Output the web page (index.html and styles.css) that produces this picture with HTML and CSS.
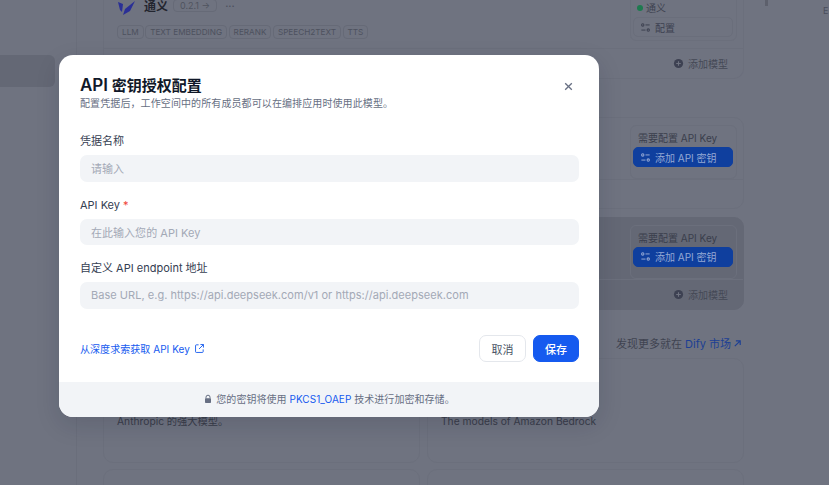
FILE: index.html
```html
<!DOCTYPE html>
<html lang="zh">
<head>
<meta charset="utf-8">
<title>API 密钥授权配置</title>
<link rel="stylesheet" href="styles.css">
</head>
<body>
<div class="page">
  <aside class="side"><div class="side-item"></div></aside>
  <main class="main">
    <section class="provider first">
      <div class="provider-top">
        <div class="provider-info">
          <div class="brand">
            <svg class="brand-logo" viewBox="0 0 20 20"><path d="M1 6l5 2-1 8-2-2zM8 13l10-8-5 10-7 4z" fill="#2a2f96"/></svg>
            <b>通义</b><span class="ver">0.2.1 →</span><span class="dots">···</span>
          </div>
          <div class="tags"><span>LLM</span><span>TEXT EMBEDDING</span><span>RERANK</span><span>SPEECH2TEXT</span><span>TTS</span></div>
        </div>
        <div class="cfg">
          <div class="cfg-status"><i class="dot"></i>通义</div>
          <div class="cfg-btn">
            <svg class="sliders" viewBox="0 0 12 12"><use href="#sl"/></svg>配置
          </div>
        </div>
      </div>
      <div class="provider-foot"><span class="add"><svg class="plus" viewBox="0 0 12 12"><use href="#pl"/></svg>添加模型</span></div>
    </section>
    <section class="provider second">
      <div class="provider-top">
        <div class="provider-info"></div>
        <div class="cfg">
          <div class="cfg-need">需要配置 API Key</div>
          <div class="cfg-btn primary"><svg class="sliders" viewBox="0 0 12 12"><use href="#sl"/></svg>添加 API 密钥</div>
        </div>
      </div>
      <div class="provider-foot"></div>
    </section>
    <section class="provider third">
      <div class="provider-top">
        <div class="provider-info"></div>
        <div class="cfg">
          <div class="cfg-need">需要配置 API Key</div>
          <div class="cfg-btn primary"><svg class="sliders" viewBox="0 0 12 12"><use href="#sl"/></svg>添加 API 密钥</div>
        </div>
      </div>
      <div class="provider-foot"><span class="add"><svg class="plus" viewBox="0 0 12 12"><use href="#pl"/></svg>添加模型</span></div>
    </section>
    <div class="more">发现更多就在&nbsp;<a>Dify 市场</a>
      <svg class="arrow" viewBox="0 0 10 10"><path d="M2 8l6-6M3.200 2H8v4.800" fill="none" stroke="#1c3f94" stroke-width="1.300"/></svg>
    </div>
    <div class="market">
      <div class="mcard"><p>Anthropic 的强大模型。</p></div>
      <div class="mcard"><p>The models of Amazon Bedrock</p></div>
      <div class="mcard"></div>
      <div class="mcard"></div>
    </div>
  </main>
  <div class="edge"><div class="thumb"></div><div class="edge-text">E</div></div>
</div>

<svg class="defs" width="0" height="0">
  <symbol id="sl" viewBox="0 0 12 12"><g fill="none" stroke="currentColor" stroke-width="1.100"><circle cx="3" cy="3.200" r="1.300"/><path d="M6 3.200h4.500"/><circle cx="9" cy="8.800" r="1.300"/><path d="M1.500 8.800H6"/></g></symbol>
  <symbol id="pl" viewBox="0 0 12 12"><circle cx="6" cy="6" r="5" fill="currentColor"/><path d="M6 3.500v5M3.500 6h5" stroke="#6f7380" stroke-width="1.200"/></symbol>
</svg>

<div class="dialog">
  <div class="dialog-body">
    <button class="close" aria-label="关闭"><svg viewBox="0 0 10 10"><path d="M2 2l6 6M8 2l-6 6" stroke="#676f83" stroke-width="1.200" fill="none"/></svg></button>
    <h1><span class="lat">API</span> 密钥授权配置</h1>
    <p class="sub">配置凭据后，工作空间中的所有成员都可以在编排应用时使用此模型。</p>
    <div class="field">
      <label>凭据名称</label>
      <div class="input">请输入</div>
    </div>
    <div class="field">
      <label>API Key <em>*</em></label>
      <div class="input">在此输入您的 API Key</div>
    </div>
    <div class="field">
      <label>自定义 API endpoint 地址</label>
      <div class="input">Base URL, e.g. https://api.deepseek.com/v1 or https://api.deepseek.com</div>
    </div>
    <div class="actions">
      <a class="doc">从深度求索获取 API Key
        <svg viewBox="0 0 12 12"><path d="M5 2H2.500A.8.8 0 0 0 1.700 2.800v6.700a.8.8 0 0 0 .8.8h6.700a.8.8 0 0 0 .8-.8V7M7 1.700h3.300V5M10.300 1.700L5.500 6.500" fill="none" stroke="#155aef" stroke-width="1"/></svg>
      </a>
      <div class="btns">
        <button class="btn">取消</button>
        <button class="btn save">保存</button>
      </div>
    </div>
  </div>
  <div class="dialog-foot">
    <svg viewBox="0 0 10 10"><path d="M3 4.500V3.200a2 2 0 0 1 4 0v1.300" fill="none" stroke="#676f83" stroke-width="1"/><rect x="2" y="4.300" width="6" height="4.700" rx=".8" fill="#676f83"/></svg>
    您的密钥将使用&nbsp;<a>PKCS1_OAEP</a>&nbsp;技术进行加密和存储。
  </div>
</div>
</body>
</html>
```
FILE: styles.css
```css
* { box-sizing: border-box; }
html, body { margin: 0; height: 100%; overflow: hidden; }
body {
  background: #6f7380;
  font-family: Inter, "Noto Sans CJK SC", sans-serif;
  font-size: 11px;
  color: #3d4150;
}
.defs { position: absolute; }
.page { display: flex; height: 485px; overflow: hidden; }
.side {
  width: 77px;
  flex: none;
  border-right: 1px solid #6a6e7b;
  padding-top: 55px;
}
.side-item { width: 55px; height: 32px; background: #646875; border-radius: 0 6px 6px 0; }
.main { width: 667px; flex: none; margin-top: -26px; padding-left: 26px; }
.edge { display: flex; gap: 55px; padding-left: 21px; align-items: flex-start; }
.thumb { width: 3px; height: 6px; background: #5d606c; flex: none; }
.edge-text { padding-top: 5px; font-size: 9px; line-height: 11px; color: #4a4e5c; }

.provider {
  width: 641px;
  border: 1px solid #6b6f7c;
  border-radius: 10px;
  display: flex;
  flex-direction: column;
}
.provider.first { height: 105px; margin-bottom: 38px; border-top-color: transparent; }
.provider.second { height: 92px; margin-bottom: 7.500px; }
.provider.third { height: 93px; background: #646875; border-color: #646875; }
.provider-top { flex: 1; display: flex; justify-content: space-between; padding: 7px 6px 0 13px; }
.first .provider-top { padding-top: 0; }
.provider-info { padding-top: 22.500px; }
.provider-foot {
  height: 30px;
  flex: none;
  border-top: 1px solid #6b6f7c;
  display: flex;
  justify-content: flex-end;
  align-items: center;
  padding-right: 15px;
}
.brand { display: flex; align-items: center; gap: 5px; height: 16px; }
.brand-logo { width: 20px; height: 20px; }
.brand b { font-size: 12px; color: #23252f; margin-left: 2px; }
.ver { border: 1px solid #666a77; border-radius: 4px; font-size: 9px; padding: 0 6px; color: #50545f; }
.dots { color: #4a4e5c; margin-left: 3px; }
.tags { display: flex; gap: 1.500px; margin-top: 11px; }
.tags span {
  border: 1px solid #666a77;
  border-radius: 4px;
  font-size: 8.200px;
  line-height: 12.500px;
  padding: 0 4px;
  color: #4d515e;
}
.cfg {
  width: 107px;
  height: 54px;
  flex: none;
  border: 1px solid #6b6f7c;
  border-radius: 6px;
  padding: 4px 3px 3px 2px;
}
.first .cfg { height: 66px; padding-top: 26.500px; }
.cfg-status { display: flex; align-items: center; gap: 3px; font-size: 10px; line-height: 11px; height: 11px; padding-left: 4px; color: #3f4351; overflow: hidden; }
.dot { width: 6px; height: 6px; border-radius: 50%; background: #1e7a4f; }
.cfg-need { font-size: 10px; line-height: 17px; padding-left: 5px; color: #3a3e4c; white-space: nowrap; }
.cfg-btn {
  height: 20px;
  border: 1px solid #6a6e7b;
  border-radius: 5px;
  display: flex;
  align-items: center;
  gap: 4px;
  padding-left: 6px;
  font-size: 10px;
  color: #3d4150;
  white-space: nowrap;
}
.first .cfg-btn { margin-top: 3.500px; }
.cfg-btn.primary { background: #0f3f9e; border-color: #0f3f9e; color: #94a8d4; }
.sliders { width: 11px; height: 11px; }
.add { display: flex; align-items: center; gap: 4px; color: #454956; font-size: 10px; }
.plus { width: 11px; height: 11px; color: #3d4152; }
.more { display: flex; align-items: center; justify-content: flex-end; width: 641px; height: 16px; margin: 25.500px 0 7px; padding-right: 2px; font-size: 11px; color: #3f4351; }
.more a { color: #1c3f94; }
.arrow { width: 9px; height: 9px; margin-left: 2px; }
.market { display: grid; grid-template-columns: 317px 317px; gap: 6.500px 7px; }
.mcard { height: 104.500px; border: 1px solid #6b6f7c; border-radius: 10px; padding: 54px 13px 0; }
.mcard p { margin: 0; font-size: 10.250px; line-height: 16px; color: #383c49; }

.dialog {
  position: absolute;
  left: 59px;
  top: 55px;
  width: 540px;
  height: 362px;
  background: #fff;
  border-radius: 14px;
  overflow: hidden;
  display: flex;
  flex-direction: column;
  box-shadow: 0 8px 24px rgba(16, 24, 40, .14);
}
.dialog-body { position: relative; flex: 1; padding: 20px 20px 0 21px; }
.close { position: absolute; right: 25px; top: 25.500px; width: 11px; height: 11px; padding: 0; border: 0; background: none; }
.close svg { width: 11px; height: 11px; display: block; }
h1 { margin: 0; font-size: 15px; line-height: 21px; font-weight: 600; color: #101828; }
.lat { font-size: 17px; }
.sub { margin: 0; font-size: 10px; line-height: 14px; letter-spacing: .1px; color: #676f83; }
.field { margin-top: 13px; }
.sub + .field { margin-top: 21px; }
.field label { display: block; font-size: 11px; line-height: 20px; color: #354052; }
.field label em { color: #f04438; font-style: normal; }
.input {
  height: 26.500px;
  margin-top: 4px;
  background: #f2f4f7;
  border-radius: 7px;
  padding-left: 11px;
  display: flex;
  align-items: center;
  font-size: 11px;
  letter-spacing: .03px;
  color: #a3a9b6;
}
.actions { display: flex; justify-content: space-between; align-items: center; margin-top: 26.500px; }
.doc { display: flex; align-items: center; gap: 4px; color: #155aef; font-size: 10px; letter-spacing: .05px; margin-top: -1px; }
.doc svg { width: 11px; height: 11px; }
.btns { display: flex; gap: 7px; }
.btn {
  width: 47px;
  height: 27px;
  padding: 0;
  border: 1px solid #e4e7ec;
  border-radius: 7px;
  background: #fff;
  font: inherit;
  color: #495464;
}
.btn.save { width: 46px; background: #155aef; border-color: #155aef; color: #fff; font-weight: 500; }
.dialog-foot {
  height: 35px;
  flex: none;
  background: #f2f4f7;
  display: flex;
  align-items: center;
  justify-content: center;
  padding: 0 0 2px 0;
  font-size: 10px;
  letter-spacing: .05px;
  color: #676f83;
}
.dialog-foot svg { width: 10px; height: 10px; margin-right: 3px; }
.dialog-foot a { color: #155aef; }
```
